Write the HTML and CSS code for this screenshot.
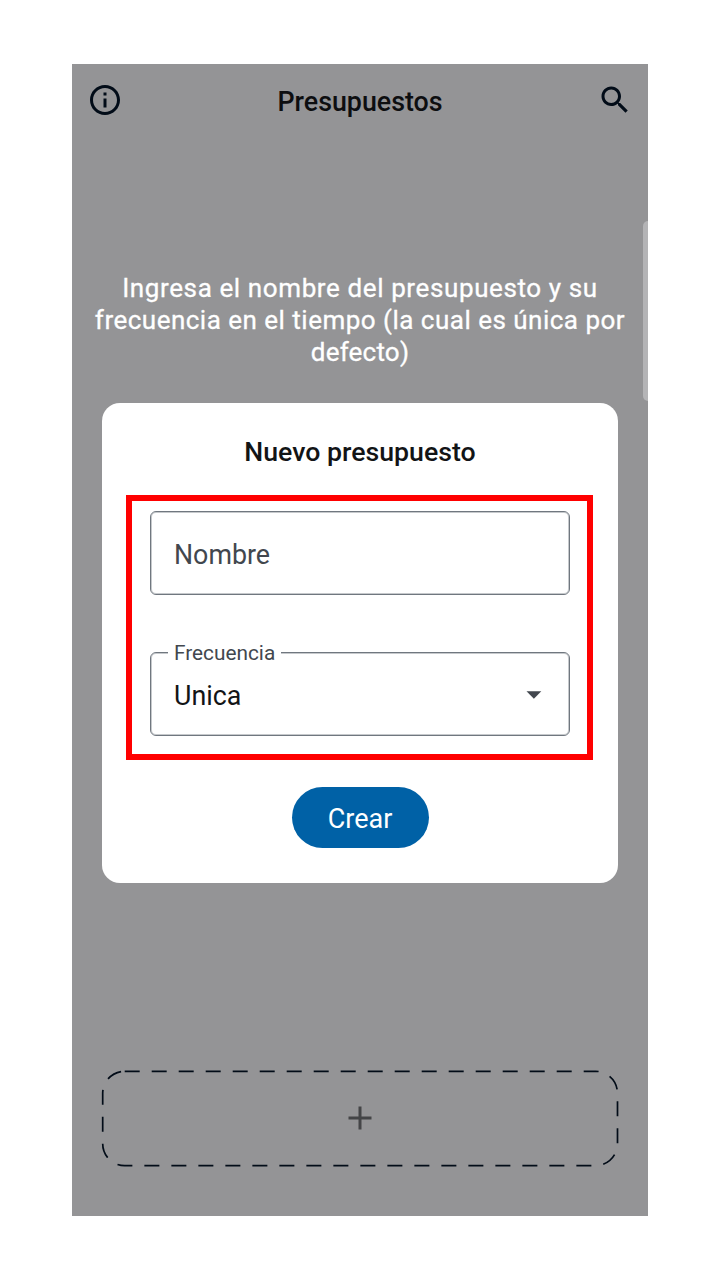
FILE: index.html
```html
<!DOCTYPE html>
<html lang="es">
<head>
<meta charset="utf-8">
<title>Presupuestos</title>
<link rel="stylesheet" href="styles.css">
</head>
<body>
<main class="phone">
  <header class="topbar">
    <svg class="icon" viewBox="0 0 24 24"><path d="M11 7h2v2h-2zm0 4h2v6h-2zm1-9C6.480 2 2 6.480 2 12s4.480 10 10 10 10-4.480 10-10S17.520 2 12 2zm0 18c-4.410 0-8-3.590-8-8s3.590-8 8-8 8 3.590 8 8-3.590 8-8 8z"/></svg>
    <h1 class="topbar-title">Presupuestos</h1>
    <svg class="icon" viewBox="0 0 24 24"><path d="M15.500 14h-.79l-.28-.27C15.410 12.590 16 11.110 16 9.500 16 5.910 13.090 3 9.500 3S3 5.910 3 9.500 5.910 16 9.500 16c1.610 0 3.090-.59 4.230-1.570l.27.28v.79l5 4.990L20.490 19l-4.990-5zm-6 0C7.010 14 5 11.990 5 9.500S7.010 5 9.500 5 14 7.010 14 9.500 11.990 14 9.500 14z"/></svg>
  </header>
  <p class="caption">
    <span class="line line-a">Ingresa el nombre del presupuesto y su</span>
    <span class="line line-b">frecuencia en el tiempo (la cual es única por</span>
    <span class="line line-c">defecto)</span>
  </p>
  <section class="dialog">
    <h2 class="dialog-title">Nuevo presupuesto</h2>
    <div class="highlight">
      <div class="field"><span class="placeholder">Nombre</span></div>
      <div class="field">
        <span class="label">Frecuencia</span>
        <span class="value">Unica</span>
        <svg class="caret" viewBox="0 0 16 8"><path d="M0.500 0.200H15.300L7.900 7.800z"/></svg>
      </div>
    </div>
    <button class="create">Crear</button>
  </section>
  <div class="add">
    <svg class="add-outline" viewBox="0 0 518 98"><rect x="1.700" y="2.300" width="514.800" height="94.400" rx="22"/></svg>
    <svg class="plus" viewBox="0 0 24 24"><path d="M12 0.500V23.500M0.500 12H23.500"/></svg>
  </div>
  <span class="edge-handle"></span>
</main>
</body>
</html>
```
FILE: styles.css
```css
* { box-sizing: border-box; }
body {
  margin: 0;
  height: 1280px;
  padding: 64px 72px;
  background: #fff;
  font-family: Roboto, "Noto Sans", sans-serif;
  color: #121416;
}
.phone {
  position: relative;
  width: 576px;
  height: 1152px;
  display: flex;
  flex-direction: column;
  align-items: center;
  background: #949496;
  overflow: hidden;
}
.topbar {
  width: 100%;
  height: 72px;
  padding: 0 15px;
  display: flex;
  justify-content: space-between;
  align-items: center;
}
.icon { width: 36px; height: 36px; fill: #020c18; }
.topbar-title { margin: 3px 0 0; font-size: 26.800px; font-weight: 500; line-height: 32px; color: #0d0e10; }
.caption {
  margin: 136px 0 0;
  display: flex;
  flex-direction: column;
  align-items: center;
  font-size: 26px;
  line-height: 32px;
  color: #fff;
  -webkit-text-stroke: 0.300px #fff;
  white-space: nowrap;
}
.line-a { letter-spacing: 0.610px; }
.line-b { letter-spacing: 0.490px; }
.line-c { letter-spacing: 0.200px; }
.dialog {
  width: 516px;
  height: 480px;
  margin-top: 34.500px;
  display: flex;
  flex-direction: column;
  align-items: center;
  background: #fff;
  border-radius: 18px;
}
.dialog-title { margin: 33px 0 27.500px; font-size: 26.700px; font-weight: 500; line-height: 32px; }
.highlight {
  width: 467px;
  height: 265px;
  margin-right: 1px;
  padding: 10px 17px 18px 18px;
  border: 6px solid #f00;
  display: flex;
  flex-direction: column;
  justify-content: space-between;
}
.field {
  position: relative;
  height: 84px;
  padding: 3px 27px 0 23px;
  border: 1px solid #70777f;
  border-radius: 6px;
  box-shadow: inset 0 0 0 1px rgba(112, 119, 127, 0.4);
  display: flex;
  align-items: center;
  justify-content: space-between;
  font-size: 26.800px;
}
.placeholder { color: #42474e; }
.label {
  position: absolute;
  left: 17px;
  top: -12px;
  padding: 0 6px;
  background: #fff;
  font-size: 20.800px;
  line-height: 25px;
  color: #42474e;
}
.caret { width: 16px; height: 8px; margin-bottom: 2px; fill: #42474e; }
.create {
  width: 137px;
  height: 61px;
  margin-top: 26.500px;
  padding: 3px 0 0;
  border: 0;
  border-radius: 31px;
  background: #0061a6;
  color: #fff;
  font: 400 27px Roboto, sans-serif;
}
.add {
  width: 518px;
  height: 98px;
  margin-top: 186.500px;
  display: grid;
  place-items: center;
}
.add > * { grid-area: 1 / 1; }
.add-outline { width: 518px; height: 98px; fill: none; stroke: #020c18; stroke-width: 1.700; stroke-dasharray: 15 12; }
.plus { width: 24px; height: 24px; stroke: #444547; stroke-width: 3; }
.edge-handle {
  position: absolute;
  right: 0;
  top: 157px;
  width: 5.500px;
  height: 180px;
  border-radius: 5px 0 0 5px;
  background: #b4b4b6;
}
```
